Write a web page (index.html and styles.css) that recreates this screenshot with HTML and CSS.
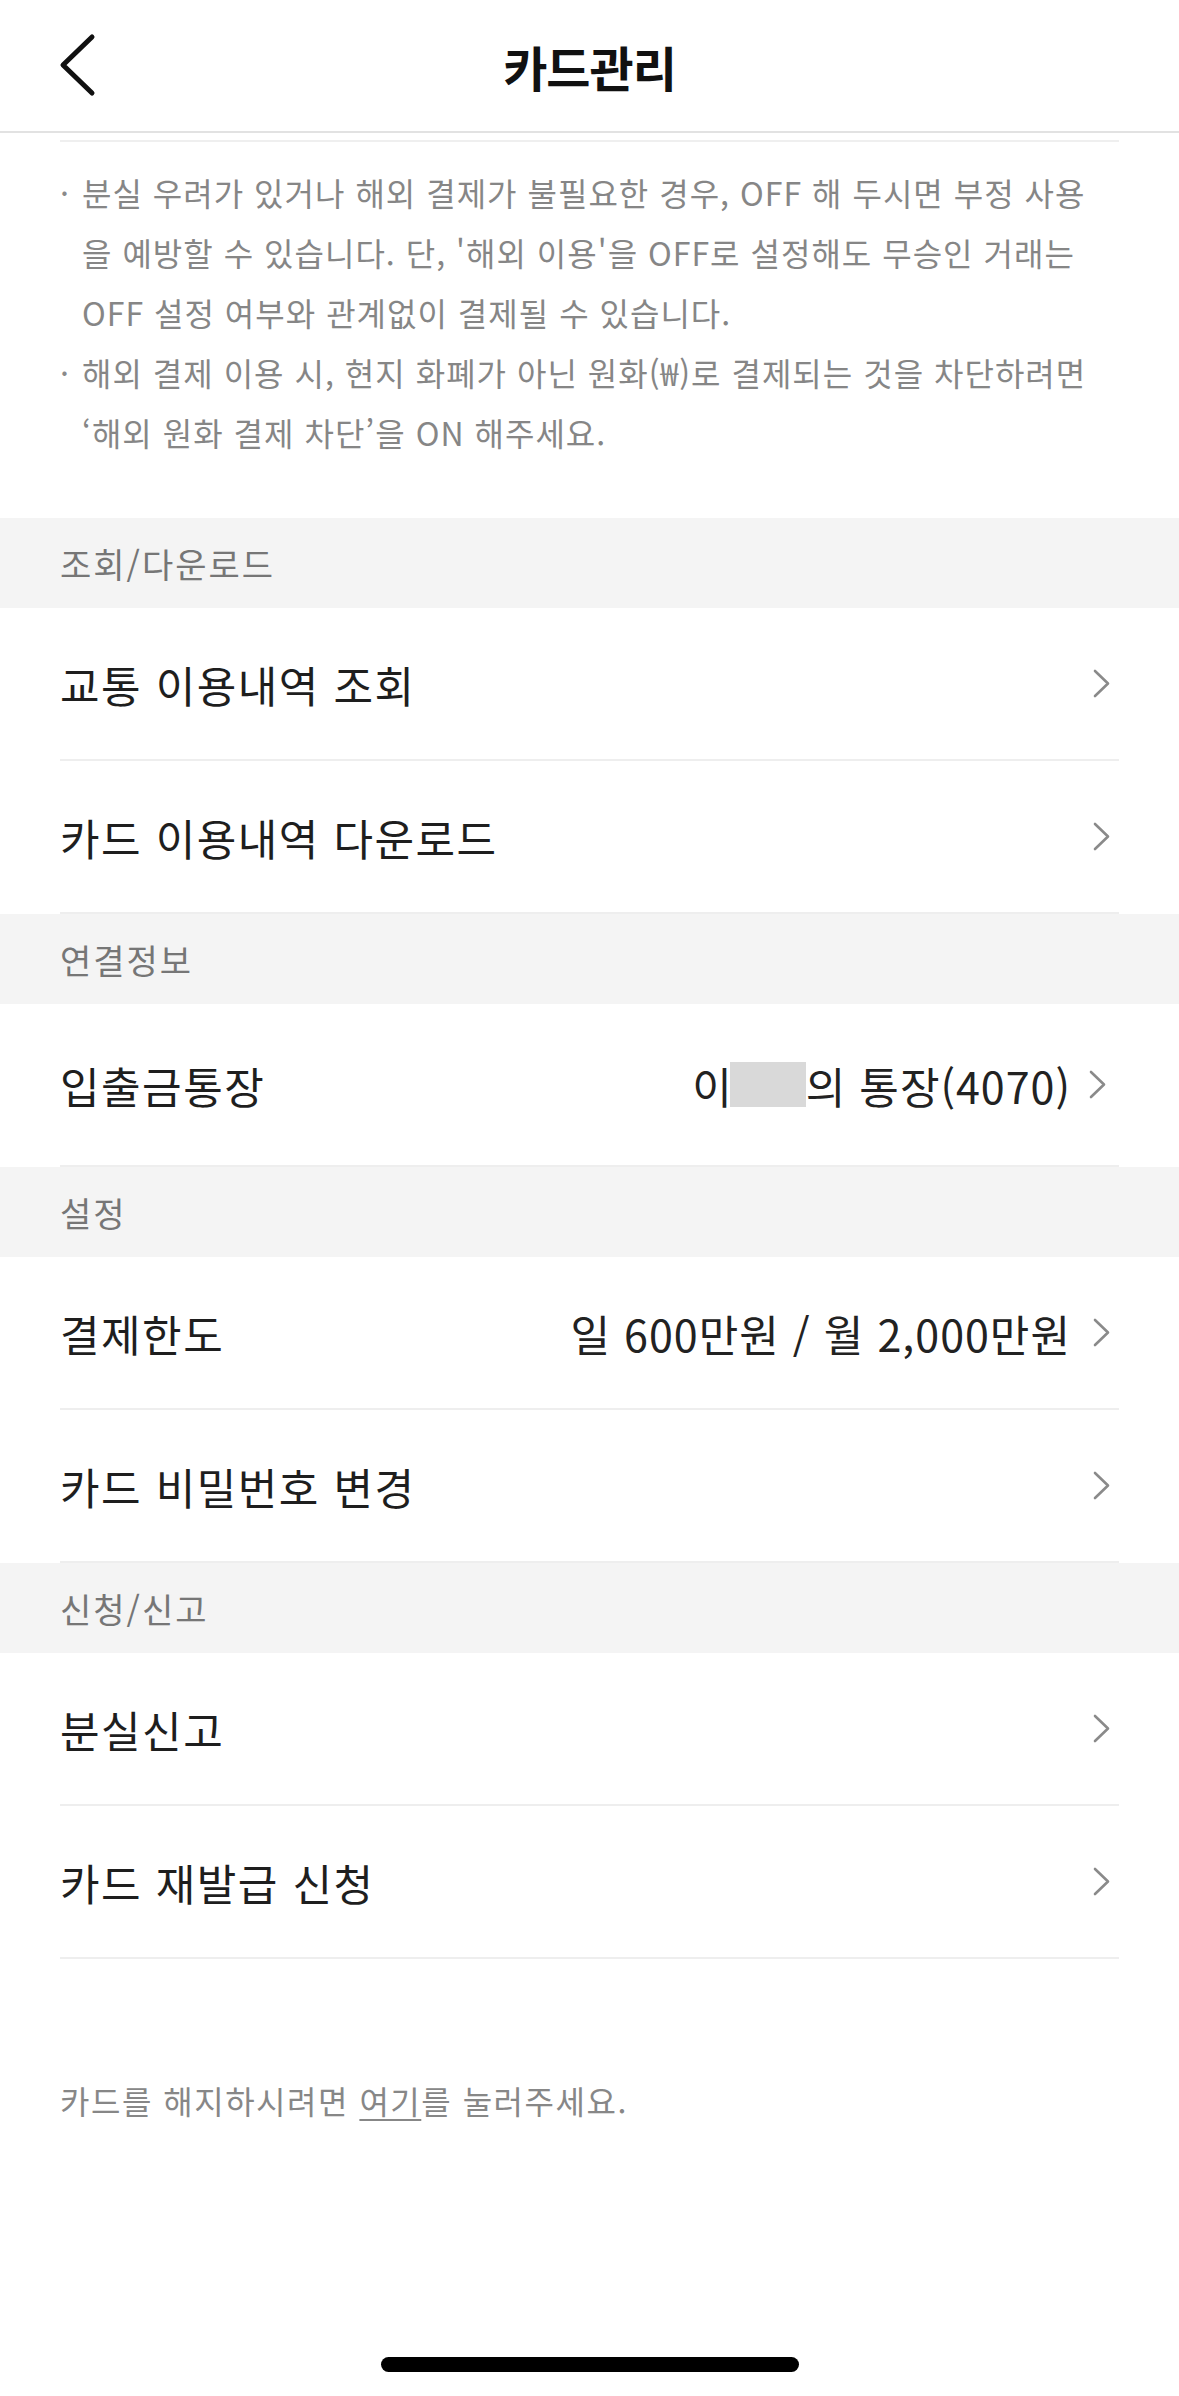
FILE: index.html
```html
<!DOCTYPE html>
<html lang="ko">
<head>
<meta charset="utf-8">
<title>카드관리</title>
<link rel="stylesheet" href="styles.css">
</head>
<body>
<div class="screen">
  <header class="nav">
    <div class="nav-left">
      <svg class="back" width="38" height="64" viewBox="0 0 38 64" aria-hidden="true">
        <polyline points="34,4 5,32 34,60" fill="none" stroke="#111" stroke-width="5" stroke-linecap="round" stroke-linejoin="round"/>
      </svg>
    </div>
    <h1 class="nav-title">카드관리</h1>
    <div class="nav-right"></div>
  </header>

  <div class="notice">
    <div class="notice-rule"></div>
    <div class="notice-item">
      <span class="dot">·</span>
      <p class="notice-text"><span class="ln">분실 우려가 있거나 해외 결제가 불필요한 경우, OFF 해 두시면 부정 사용</span><span class="ln">을 예방할 수 있습니다. 단, '해외 이용'을 OFF로 설정해도 무승인 거래는</span><span class="ln">OFF 설정 여부와 관계없이 결제될 수 있습니다.</span></p>
    </div>
    <div class="notice-item">
      <span class="dot">·</span>
      <p class="notice-text"><span class="ln">해외 결제 이용 시, 현지 화폐가 아닌 원화(₩)로 결제되는 것을 차단하려면</span><span class="ln">‘해외 원화 결제 차단’을 ON 해주세요.</span></p>
    </div>
  </div>

  <section class="group">
    <div class="group-head">조회/다운로드</div>
    <div class="row"><span class="row-label">교통 이용내역 조회</span><span class="row-right"><svg class="chev" width="17" height="29" viewBox="0 0 17 29"><polyline points="2,2 15,14.5 2,27" fill="none" stroke="#8a8a8a" stroke-width="2.6" stroke-linecap="round" stroke-linejoin="round"/></svg></span></div>
    <div class="row"><span class="row-label">카드 이용내역 다운로드</span><span class="row-right"><svg class="chev" width="17" height="29" viewBox="0 0 17 29"><polyline points="2,2 15,14.5 2,27" fill="none" stroke="#8a8a8a" stroke-width="2.6" stroke-linecap="round" stroke-linejoin="round"/></svg></span></div>
  </section>

  <section class="group">
    <div class="group-head">연결정보</div>
    <div class="row row-tall"><span class="row-label">입출금통장</span><span class="row-right"><span class="row-value">이<span class="mask"></span>의 통장(4070)</span><svg class="chev chev-tight" width="17" height="29" viewBox="0 0 17 29"><polyline points="2,2 15,14.5 2,27" fill="none" stroke="#8a8a8a" stroke-width="2.6" stroke-linecap="round" stroke-linejoin="round"/></svg></span></div>
  </section>

  <section class="group">
    <div class="group-head">설정</div>
    <div class="row"><span class="row-label">결제한도</span><span class="row-right"><span class="row-value">일 600만원 / 월 2,000만원</span><svg class="chev" width="17" height="29" viewBox="0 0 17 29"><polyline points="2,2 15,14.5 2,27" fill="none" stroke="#8a8a8a" stroke-width="2.6" stroke-linecap="round" stroke-linejoin="round"/></svg></span></div>
    <div class="row"><span class="row-label">카드 비밀번호 변경</span><span class="row-right"><svg class="chev" width="17" height="29" viewBox="0 0 17 29"><polyline points="2,2 15,14.5 2,27" fill="none" stroke="#8a8a8a" stroke-width="2.6" stroke-linecap="round" stroke-linejoin="round"/></svg></span></div>
  </section>

  <section class="group">
    <div class="group-head">신청/신고</div>
    <div class="row"><span class="row-label">분실신고</span><span class="row-right"><svg class="chev" width="17" height="29" viewBox="0 0 17 29"><polyline points="2,2 15,14.5 2,27" fill="none" stroke="#8a8a8a" stroke-width="2.6" stroke-linecap="round" stroke-linejoin="round"/></svg></span></div>
    <div class="row"><span class="row-label">카드 재발급 신청</span><span class="row-right"><svg class="chev" width="17" height="29" viewBox="0 0 17 29"><polyline points="2,2 15,14.5 2,27" fill="none" stroke="#8a8a8a" stroke-width="2.6" stroke-linecap="round" stroke-linejoin="round"/></svg></span></div>
  </section>

  <p class="footer-note">카드를 해지하시려면 <span class="link">여기</span>를 눌러주세요.</p>

  <div class="home-indicator"></div>
</div>
</body>
</html>
```

FILE: styles.css
```css
* {
  box-sizing: border-box;
}

html, body {
  margin: 0;
  padding: 0;
  background: #ffffff;
}

body {
  font-family: "Noto Sans CJK KR", "Noto Sans", sans-serif;
  color: #1e1e1e;
}

.screen {
  width: 1179px;
  min-height: 2396px;
  display: flex;
  flex-direction: column;
}

/* Navigation bar */
.nav {
  height: 133px;
  display: grid;
  grid-template-columns: 1fr auto 1fr;
  align-items: center;
  border-bottom: 2px solid #e2e2e2;
}

.nav-left {
  display: flex;
  align-items: center;
  padding-left: 58px;
  padding-bottom: 2px;
}

.back {
  display: block;
}

.nav-title {
  margin: 0;
  font-size: 48px;
  font-weight: 700;
  color: #111111;
  letter-spacing: -1px;
  line-height: 1;
}

/* Notice text */
.notice {
  padding: 7px 60px 56px 60px;
}

.notice-rule {
  height: 2px;
  background: #efefef;
  margin-bottom: 20px;
}

.notice-item {
  display: flex;
}

.dot {
  width: 22px;
  flex: none;
  font-size: 32px;
  line-height: 60px;
  color: #8a8a8a;
}

.notice-text {
  margin: 0;
  font-size: 32px;
  line-height: 60px;
  letter-spacing: 1px;
  color: #868686;
}

.ln {
  display: block;
  white-space: nowrap;
}

/* Groups */
.group-head {
  height: 90px;
  background: #f4f4f4;
  display: flex;
  align-items: center;
  padding-left: 60px;
  font-size: 34px;
  letter-spacing: 2px;
  color: #767676;
}

.row {
  height: 153px;
  margin: 0 60px;
  border-bottom: 2px solid #eeeeee;
  display: flex;
  align-items: center;
  justify-content: space-between;
}

.row-tall {
  height: 163px;
}

.row-label {
  font-size: 43px;
  letter-spacing: 1.5px;
  color: #1e1e1e;
  white-space: nowrap;
}

.row-right {
  display: flex;
  align-items: center;
}

.row-value {
  font-size: 43px;
  letter-spacing: 1px;
  color: #222222;
  white-space: nowrap;
  display: flex;
  align-items: center;
}

.mask {
  display: inline-block;
  width: 76px;
  height: 45px;
  background: #d9d9d9;
  margin-left: -3px;
}

.chev {
  display: block;
  margin-left: 22px;
  margin-right: 9px;
}

.chev-tight {
  margin-left: 18px;
  margin-right: 13px;
}

/* Footer note */
.footer-note {
  margin: 111px 0 0 0;
  padding-left: 60px;
  font-size: 32px;
  letter-spacing: 1.5px;
  line-height: 60px;
  color: #878787;
}

.link {
  text-decoration: underline;
  text-decoration-thickness: 2px;
  text-underline-offset: 5px;
}

/* Home indicator */
.home-indicator {
  margin: auto auto 24px auto;
  width: 418px;
  height: 15px;
  border-radius: 8px;
  background: #000000;
}
```
